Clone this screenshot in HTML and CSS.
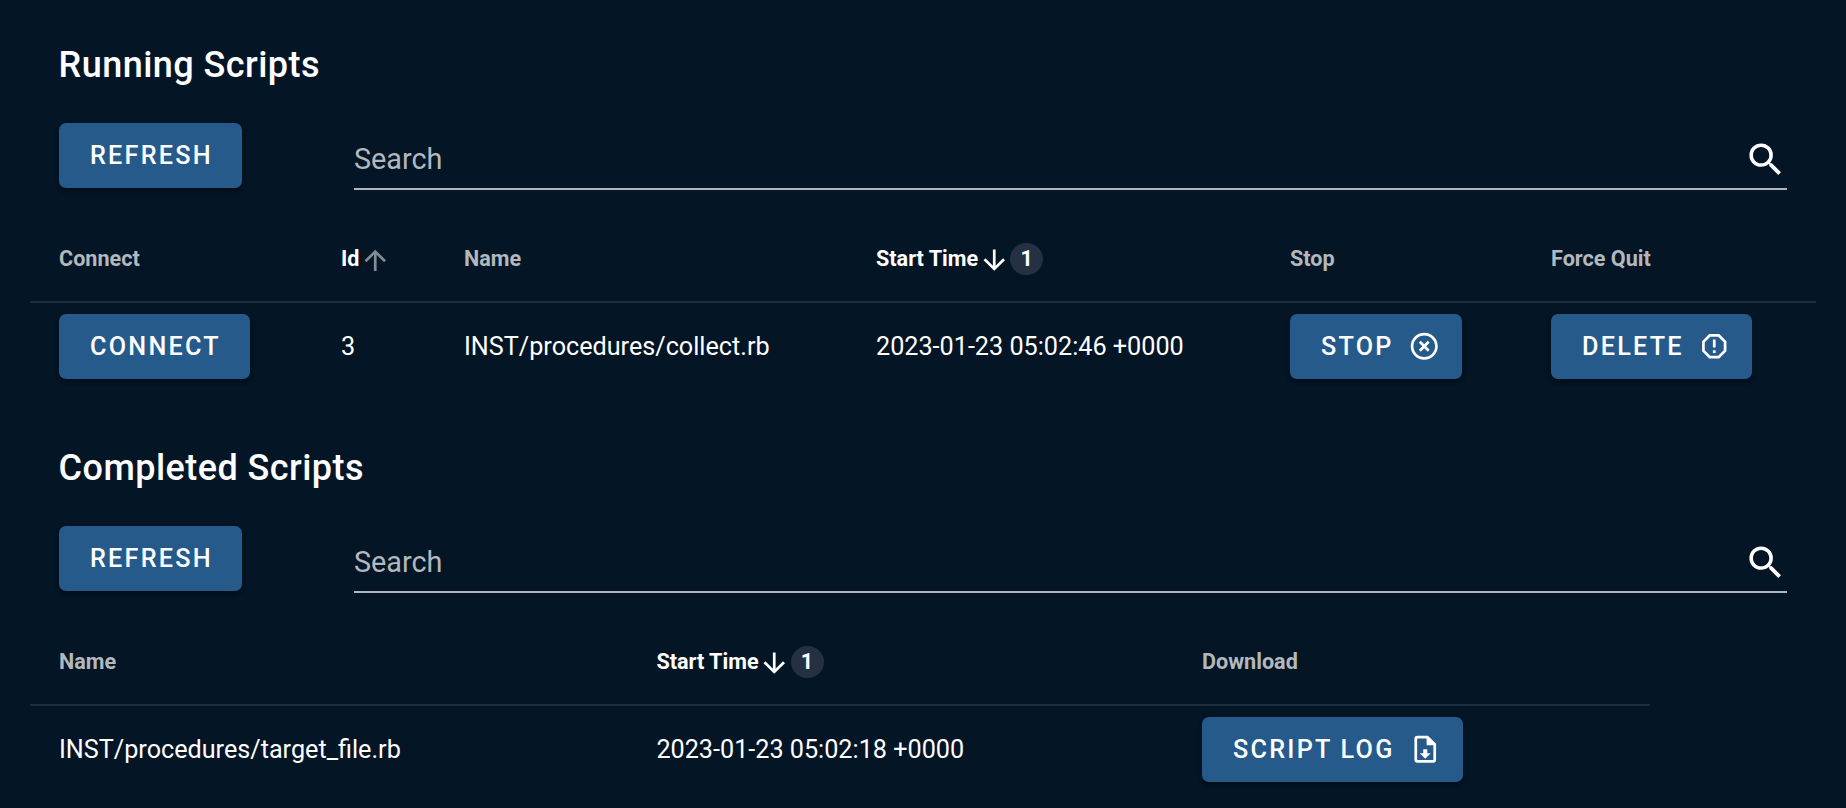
FILE: index.html
```html
<!DOCTYPE html>
<html lang="en">
<head>
<meta charset="utf-8">
<title>Scripts</title>
<link rel="stylesheet" href="styles.css">
</head>
<body>
<section class="card">
  <h1 class="title">Running Scripts</h1>
  <div class="toolbar">
    <button class="btn">Refresh</button>
    <div class="search"><span class="search-label">Search</span><svg class="search-icon" viewBox="0 0 24 24"><path d="M9.5,3A6.5,6.5 0 0,1 16,9.5C16,11.11 15.41,12.59 14.44,13.73L14.71,14H15.5L20.5,19L19,20.5L14,15.5V14.71L13.73,14.44C12.59,15.41 11.11,16 9.5,16A6.5,6.5 0 0,1 3,9.5A6.5,6.5 0 0,1 9.5,3M9.5,5C7,5 5,7 5,9.5C5,12 7,14 9.5,14C12,14 14,12 14,9.5C14,7 12,5 9.5,5Z"/></svg></div>
  </div>
  <div class="table running">
    <div class="row head">
      <span>Connect</span>
      <span class="sorted">Id<svg class="arrow dim" viewBox="0 0 24 24"><path d="M13,20H11V8L5.5,13.5L4.08,12.08L12,4.16L19.92,12.08L18.5,13.5L13,8V20Z"/></svg></span>
      <span>Name</span>
      <span class="sorted">Start Time<svg class="arrow" viewBox="0 0 24 24"><path d="M11,4H13V16L18.5,10.5L19.92,11.92L12,19.84L4.08,11.92L5.5,10.5L11,16V4Z"/></svg><span class="badge">1</span></span>
      <span>Stop</span>
      <span>Force Quit</span>
    </div>
    <div class="row">
      <span><button class="btn">Connect</button></span>
      <span>3</span>
      <span>INST/procedures/collect.rb</span>
      <span>2023-01-23 05:02:46 +0000</span>
      <span><button class="btn with-icon">Stop<svg class="btn-icon" viewBox="0 0 24 24"><path d="M12,20C7.59,20 4,16.41 4,12C4,7.59 7.59,4 12,4C16.41,4 20,7.59 20,12C20,16.41 16.41,20 12,20M12,2C6.47,2 2,6.47 2,12C2,17.53 6.47,22 12,22C17.53,22 22,17.53 22,12C22,6.47 17.53,2 12,2M14.59,8L12,10.59L9.41,8L8,9.41L10.59,12L8,14.59L9.41,16L12,13.41L14.59,16L16,14.59L13.41,12L16,9.41L14.59,8Z"/></svg></button></span>
      <span><button class="btn with-icon">Delete<svg class="btn-icon" viewBox="0 0 24 24"><path d="M8.27,3L3,8.27V15.73L8.27,21H15.73C17.5,19.24 21,15.73 21,15.73V8.27L15.73,3M9.1,5H14.9L19,9.1V14.9L14.9,19H9.1L5,14.9V9.1M11,15H13V17H11V15M11,7H13V13H11V7"/></svg></button></span>
    </div>
  </div>
</section>
<section class="card">
  <h1 class="title">Completed Scripts</h1>
  <div class="toolbar">
    <button class="btn">Refresh</button>
    <div class="search"><span class="search-label">Search</span><svg class="search-icon" viewBox="0 0 24 24"><path d="M9.5,3A6.5,6.5 0 0,1 16,9.5C16,11.11 15.41,12.59 14.44,13.73L14.71,14H15.5L20.5,19L19,20.5L14,15.5V14.71L13.73,14.44C12.59,15.41 11.11,16 9.5,16A6.5,6.5 0 0,1 3,9.5A6.5,6.5 0 0,1 9.5,3M9.5,5C7,5 5,7 5,9.5C5,12 7,14 9.5,14C12,14 14,12 14,9.5C14,7 12,5 9.5,5Z"/></svg></div>
  </div>
  <div class="table completed">
    <div class="row head">
      <span>Name</span>
      <span class="sorted">Start Time<svg class="arrow" viewBox="0 0 24 24"><path d="M11,4H13V16L18.5,10.5L19.92,11.92L12,19.84L4.08,11.92L5.5,10.5L11,16V4Z"/></svg><span class="badge">1</span></span>
      <span>Download</span>
    </div>
    <div class="row">
      <span>INST/procedures/target_file.rb</span>
      <span>2023-01-23 05:02:18 +0000</span>
      <span><button class="btn with-icon">Script Log<svg class="btn-icon" viewBox="0 0 24 24"><path d="M14,2H6C4.89,2 4,2.89 4,4V20C4,21.11 4.89,22 6,22H18C19.11,22 20,21.11 20,20V8L14,2M18,20H6V4H13V9H18V20M12,19L8,15H10.5V12H13.5V15H16L12,19Z"/></svg></button></span>
    </div>
  </div>
</section>
</body>
</html>
```
FILE: styles.css
```css
* { box-sizing: border-box; }
body {
  margin: 0;
  height: 808px;
  overflow: hidden;
  background: #041526;
  color: #fff;
  font-family: Roboto, "Liberation Sans", sans-serif;
}
.card {
  height: 403px;
  padding: 36px 30px 0;
}
.title {
  margin: 0;
  padding-left: 28.6px;
  height: 58px;
  line-height: 58px;
  font-size: 36px;
  font-weight: 500;
  letter-spacing: 0.0125em;
}
.toolbar {
  display: flex;
  align-items: flex-start;
  justify-content: space-between;
  height: 120px;
  padding: 29px 29px 0;
}
.btn {
  display: inline-flex;
  align-items: center;
  height: 65px;
  padding: 0 28.8px 0 31px;
  border: 0;
  border-radius: 7px;
  background: #255a8b;
  color: #fff;
  font: 500 25.2px Roboto, "Liberation Sans", sans-serif;
  letter-spacing: 0.0893em;
  text-transform: uppercase;
  box-shadow: 0 4px 3px -3px rgba(0, 0, 0, 0.3), 0 3px 4px rgba(0, 0, 0, 0.2), 0 2px 6px rgba(0, 0, 0, 0.08);
}
.with-icon { padding-right: 21.2px; }
.btn-icon {
  width: 32.5px;
  height: 32.5px;
  margin: 0 0 0 14.5px;
  fill: #fff;
}
.search {
  display: flex;
  align-items: center;
  justify-content: space-between;
  width: 1433px;
  height: 67px;
  padding-top: 7px;
  border-bottom: 2px solid #b0b6bb;
}
.search-label { color: #b3b8bd; font-size: 28.8px; }
.search-icon { width: 43.3px; height: 43.3px; margin-top: 1.5px; fill: #fff; }
.row {
  display: grid;
  height: 87px;
  align-items: center;
  padding-left: 29px;
  font-size: 25.2px;
  white-space: nowrap;
}
.running .row { grid-template-columns: 282px 123px 412px 414px 261px 1fr; }
.completed { width: 1620px; }
.completed .row { grid-template-columns: 597.4px 545.6px 1fr; }
.row > span { display: flex; align-items: center; }
.head {
  height: 89px;
  padding-top: 2.5px;
  border-bottom: 2px solid #1f2e3e;
  color: #b3b8bd;
  font-size: 21.6px;
  font-weight: 700;
}
.head .sorted { color: #fff; }
.arrow {
  width: 32.5px;
  height: 32.5px;
  margin: 3px 0 0 -0.5px;
  fill: #fff;
}
.dim { opacity: 0.5; }
.badge {
  width: 33px;
  height: 32.5px;
  border-radius: 50%;
  background: #253142;
  text-align: center;
  line-height: 32.5px;
}
```
